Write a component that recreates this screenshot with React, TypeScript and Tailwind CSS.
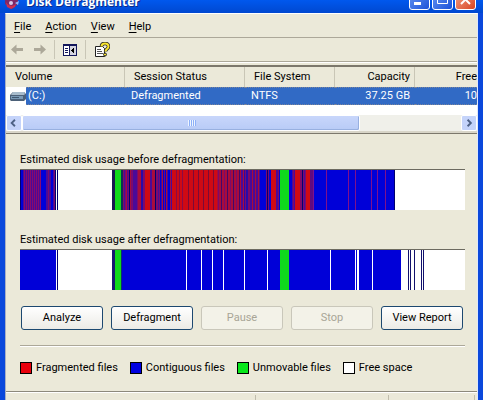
import type { ReactNode } from "react";

type Band = [x: number, width: number, color: string];

const BLUE = "#0000d8";
const NAVY = "#000070";
const RED = "#cf0a14";
const CRIMSON = "#a80c3c";
const PURPLE = "#7c0a6c";
const VIOLET = "#4a0a98";
const GREEN = "#0fd81c";
const WHITE = "#ffffff";

// evenly repeated thin lines, used where the files are badly scattered
function stripes(from: number, to: number, step: number, color: string): Band[] {
  const out: Band[] = [];
  for (let x = from; x < to; x += step) out.push([x, 1, color]);
  return out;
}

const before: Band[] = [
  [0, 375, BLUE],
  [0, 1, NAVY],
  [3, 18, VIOLET],
  ...stripes(4, 21, 2, "#8a0a6c"),
  [26, 10, VIOLET],
  ...stripes(28, 35, 3, PURPLE),
  [31, 2, BLUE],
  [35, 1, NAVY],
  [36, 1, WHITE],
  [37, 1, NAVY],
  [38, 54, WHITE],
  [92, 3, "#181850"],
  [95, 6, GREEN],
  [101, 2, "#103050"],
  [103, 22, PURPLE],
  ...stripes(104, 125, 3, VIOLET),
  ...stripes(106, 151, 4, CRIMSON),
  [109, 1, NAVY],
  [114, 2, VIOLET],
  [119, 2, CRIMSON],
  [121, 2, "#2a0aa8"],
  [125, 5, RED],
  [130, 2, VIOLET],
  [132, 3, CRIMSON],
  [135, 1, NAVY],
  [136, 4, PURPLE],
  [138, 1, VIOLET],
  [141, 1, VIOLET],
  [144, 1, PURPLE],
  [147, 1, VIOLET],
  [151, 73, RED],
  [151, 1, VIOLET],
  ...stripes(156, 164, 3, "#8a0a48"),
  ...stripes(168, 197, 5, "#7c0a38"),
  [197, 29, CRIMSON],
  ...stripes(198, 224, 3, PURPLE),
  ...stripes(201, 224, 6, "#40086c"),
  [221, 2, VIOLET],
  [224, 4, "#2a0aa8"],
  [225, 1, PURPLE],
  [228, 2, PURPLE],
  [230, 10, VIOLET],
  ...stripes(232, 240, 3, CRIMSON),
  [246, 3, PURPLE],
  [247, 1, NAVY],
  [251, 5, RED],
  [256, 2, VIOLET],
  [258, 1, PURPLE],
  [260, 9, GREEN],
  [272, 3, VIOLET],
  [273, 1, PURPLE],
  [275, 5, RED],
  [280, 6, PURPLE],
  [282, 1, NAVY],
  [284, 1, VIOLET],
  [286, 4, RED],
  [290, 3, "#600a80"],
  ...[293, 306, 328, 335, 351, 357, 365].map((x): Band => [x, 1, "#80108c"]),
  [374, 1, NAVY],
];

const after: Band[] = [
  [0, 36, BLUE],
  [37, 1, NAVY],
  [92, 289, BLUE],
  [92, 3, "#181870"],
  [95, 6, GREEN],
  [101, 1, "#103070"],
  ...[166, 181, 192, 203, 224, 247, 310, 335, 352].map((x): Band => [x, 1, WHITE]),
  [337, 2, WHITE],
  [260, 9, GREEN],
  ...[388, 390, 394, 401, 403].map((x): Band => [x, 1, "#10106c"]),
];

const legend = [
  { label: "Fragmented files", color: "bg-[#e8000c]" },
  { label: "Contiguous files", color: "bg-[#0000e0]" },
  { label: "Unmovable files", color: "bg-[#08e81c]" },
  { label: "Free space", color: "bg-white" },
];

const actions = [
  { label: "Analyze", disabled: false },
  { label: "Defragment", disabled: false },
  { label: "Pause", disabled: true },
  { label: "Stop", disabled: true },
  { label: "View Report", disabled: false },
];

function UsageChart({ title, bands }: { title: string; bands: Band[] }) {
  return (
    <section>
      <h2 className="h-[18px] leading-[18px]">{title}</h2>
      <svg
        role="img"
        aria-label={title}
        viewBox="0 0 445 40"
        preserveAspectRatio="none"
        shapeRendering="crispEdges"
        className="box-content block h-10 w-full border-t border-[#6c6a60] bg-white"
      >
        {bands.map(([x, width, color], i) => (
          <rect key={i} x={x} width={width} height="40" fill={color} />
        ))}
      </svg>
    </section>
  );
}

function TitleButton({ label, close, children }: { label: string; close?: boolean; children: ReactNode }) {
  return (
    <button
      aria-label={label}
      className={`h-[21px] w-[21px] shrink-0 rounded-[3px] border border-white ${
        close
          ? "bg-linear-to-br from-[#f0a088] to-[#d8421c]"
          : "bg-linear-to-br from-[#6a98f4] to-[#1c50d8]"
      }`}
    >
      <svg viewBox="0 0 19 19" className="block h-full w-full" fill="none" stroke="white">
        {children}
      </svg>
    </button>
  );
}

function ToolbarDivider() {
  return <div className="h-[19px] w-px bg-[#c9c6b6]" />;
}

function TitleBar() {
  return (
    <header className="flex h-[13px] shrink-0 items-end overflow-hidden bg-linear-to-b from-[#0058ee] to-[#0048d0] pr-[7px] pb-[3px] pl-1">
      <svg viewBox="0 0 16 16" className="h-4 w-4 shrink-0">
        <path d="M1 5 8 1l6 4v5l-6 5-7-5z" fill="#7c2868" />
        <path d="M2 8c2 4 6 5 10 2l-1 3-4 2-4-2z" fill="#d03050" />
        <circle cx="7" cy="9" r="2" fill="#d8c8e8" />
        <path d="m11 9 4-2-1 4z" fill="#90b8f8" />
      </svg>
      <h1 className="ml-1.5 h-4 grow whitespace-nowrap font-['Open_Sans',sans-serif] text-[12px] leading-4 font-bold text-white [text-shadow:1px_1px_#0c2c88]">
        Disk Defragmenter
      </h1>
      <div className="flex gap-0.5">
        <TitleButton label="Minimize">
          <path d="M4 13.5h7" strokeWidth="3" />
        </TitleButton>
        <TitleButton label="Maximize">
          <path d="M4.5 4.5h10v9h-10zM4 5.5h11" />
        </TitleButton>
        <TitleButton label="Close" close>
          <path d="m5 5 9 9m0-9-9 9" strokeWidth="2" />
        </TitleButton>
      </div>
    </header>
  );
}

function Toolbar() {
  return (
    <div className="flex h-6 items-center border-b border-[#aca899] pl-1">
      <button aria-label="Back" disabled>
        <svg viewBox="0 0 14 11" className="h-[11px] w-[14px]">
          <path d="M1 5.500 6.500 .5v3.500H13v3H6.500v3.500z" fill="#aca899" />
        </svg>
      </button>
      <button aria-label="Forward" disabled className="ml-2">
        <svg viewBox="0 0 14 11" className="h-[11px] w-[14px]">
          <path d="M14 5.500 8.500 .5v3.500H2v3h6.500v3.500z" fill="#aca899" />
        </svg>
      </button>
      <div className="ml-2">
        <ToolbarDivider />
      </div>
      <button aria-label="Show/Hide Console Tree" className="ml-2">
        <svg viewBox="0 0 14 12" className="h-3 w-[14px]" shapeRendering="crispEdges">
          <path d="M0 0h14v12H0z" fill="#14185c" />
          <path d="M1 2h5v9H1z" fill="#fff" />
          <path d="M7 2h6v9H7z" fill="#d4d4e0" />
          <path d="M2 4h3M2 6h3M2 8h3" stroke="#14185c" transform="translate(0 .5)" />
          <path d="M11 3v7L8 6.500z" fill="#000" />
        </svg>
      </button>
      <div className="ml-2">
        <ToolbarDivider />
      </div>
      <button aria-label="Help" className="ml-2">
        <svg viewBox="0 0 16 16" className="h-4 w-4">
          <path d="M1.500 4.500h7l2 2v8h-9z" fill="#fff" stroke="#222" />
          <path d="M3 7.500h4M3 9.500h5M3 11.500h6" stroke="#555" />
          <path d="M7.500 4.500C7.500 2 9 1.500 11 1.500s3.500 1 3.500 3c0 2.500-3 2.500-3 5" fill="none" stroke="#222" strokeWidth="3.500" />
          <path d="M7.500 4.500C7.500 2 9 1.500 11 1.500s3.500 1 3.500 3c0 2.500-3 2.500-3 5" fill="none" stroke="#f8e430" strokeWidth="2" />
          <circle cx="11" cy="12.500" r="1.500" fill="#f8e430" stroke="#222" />
        </svg>
      </button>
    </div>
  );
}

function VolumeList() {
  const head = "border-r border-[#c9c6b6] font-normal";
  const cell = "border-y border-dotted border-[#7c8498] bg-[#316ac5] text-white";
  return (
    <div className="border-t-2 border-[#7c786c] bg-white">
      <div className="h-12 overflow-hidden">
        <table className="w-full table-fixed border-separate border-spacing-0 whitespace-nowrap">
          <thead>
            <tr className="h-5 bg-[#ebe9d9] text-left">
              <th className={`${head} w-[119px] pl-[9px]`}>Volume</th>
              <th className={`${head} w-[120px] pl-[9px]`}>Session Status</th>
              <th className={`${head} w-[90px] pl-[9px]`}>File System</th>
              <th className={`${head} w-20 pr-1 text-right`}>Capacity</th>
              <th className="text-right font-normal">Free</th>
            </tr>
          </thead>
          <tbody>
            <tr className="h-[18px]">
              <td>
                <div className="flex items-center pl-1">
                  <svg viewBox="0 0 16 10" className="h-[10px] w-4 shrink-0">
                    <path d="M3 1h11l2 2v5l-2 2H1L0 9V4z" fill="#4c6078" />
                    <path d="M3 1h11l1 2-1 1H1z" fill="#a8bccc" />
                    <path d="M1 5h12v3H1z" fill="#7898b4" />
                    <path d="M2 6.500h7" stroke="#405870" />
                  </svg>
                  <span className={`${cell} h-[18px] grow pl-0.5 leading-4`}>(C:)</span>
                </div>
              </td>
              <td className={`${cell} pl-[6px]`}>Defragmented</td>
              <td className={`${cell} pl-[6px]`}>NTFS</td>
              <td className={`${cell} pr-[5px] text-right`}>37.25 GB</td>
              <td className={`${cell} text-right`}>10</td>
            </tr>
          </tbody>
        </table>
      </div>
      <div className="flex h-4 bg-[#f0f0ea]">
        <ScrollButton label="Scroll left" path="M8.500 4 5 7.500 8.500 11" />
        <div className="flex grow">
          <div className="flex w-[77%] items-center justify-center gap-px rounded-xs border border-white bg-linear-to-b from-[#c8d6fb] to-[#b8cbf6] shadow-[inset_-1px_-1px_#98b0e0]">
            {[0, 1, 2, 3].map((i) => (
              <i key={i} className="h-[6px] w-px bg-[#eef4fe] shadow-[1px_0_#8cb0f8]" />
            ))}
          </div>
        </div>
        <ScrollButton label="Scroll right" path="M6 4l3.500 3.500L6 11" />
      </div>
      <div className="h-0.5 bg-[#d8d5c8]" />
    </div>
  );
}

function ScrollButton({ label, path }: { label: string; path: string }) {
  return (
    <button aria-label={label} className="h-4 w-4 shrink-0 rounded-xs border border-white bg-[#c4d3fa]">
      <svg viewBox="0 0 15 15" className="block h-full w-full">
        <path d={path} fill="none" stroke="#4d6185" strokeWidth="2" />
      </svg>
    </button>
  );
}

export default function App() {
  return (
    <div className="flex min-h-screen flex-col bg-[#0a48dc] font-[Roboto,sans-serif] text-[11px] leading-4 text-black">
      <TitleBar />
      <div className="mx-[5px] flex grow flex-col border-t border-r border-l border-t-white border-r-[#dfe8fa] border-l-[#a8b0c4] bg-[#ebe9d9]">
        <nav className="flex h-6 items-center gap-[14px] border-b border-[#aca899] pt-0.5 pl-2">
          {["File", "Action", "View", "Help"].map((item) => (
            <button key={item}>
              <span className="underline underline-offset-2">{item[0]}</span>
              {item.slice(1)}
            </button>
          ))}
        </nav>
        <Toolbar />
        <div className="h-[3px] border-t border-white" />
        <VolumeList />

        <main className="border-t border-b border-t-[#7c786c] border-b-[#8c897c] pr-3 pb-[15px] pl-[14px] shadow-[0_1px_white]">
          <div className="flex flex-col gap-[21px] pt-[17px]">
            <UsageChart title="Estimated disk usage before defragmentation:" bands={before} />
            <UsageChart title="Estimated disk usage after defragmentation:" bands={after} />
          </div>
          <div className="mt-4 flex gap-2 px-px">
            {actions.map(({ label, disabled }) => (
              <button
                key={label}
                disabled={disabled}
                className="h-6 w-[82px] rounded-[3px] border border-[#1c4870] bg-linear-to-b from-white to-[#ecebe6] disabled:border-[#c9c7ba] disabled:bg-none disabled:bg-[#f3f2e8] disabled:text-[#a8a596]"
              >
                {label}
              </button>
            ))}
          </div>
          <hr className="mt-[15px] border-[#aca899] shadow-[0_1px_white]" />
          <ul className="mt-[14px] flex gap-3 whitespace-nowrap">
            {legend.map(({ label, color }) => (
              <li key={label} className="flex items-center gap-1">
                <span className={`h-3 w-3 border border-black ${color}`} />
                {label}
              </li>
            ))}
          </ul>
        </main>

        <footer className="mt-[3px] flex min-h-1 grow">
          <div className="grow border-r border-[#c0bdac]" />
          <div className="w-[133px] border-r border-[#c0bdac]" />
          <div className="w-[86px] border-r border-[#c0bdac]" />
          <div className="w-0.5" />
        </footer>
      </div>
    </div>
  );
}
